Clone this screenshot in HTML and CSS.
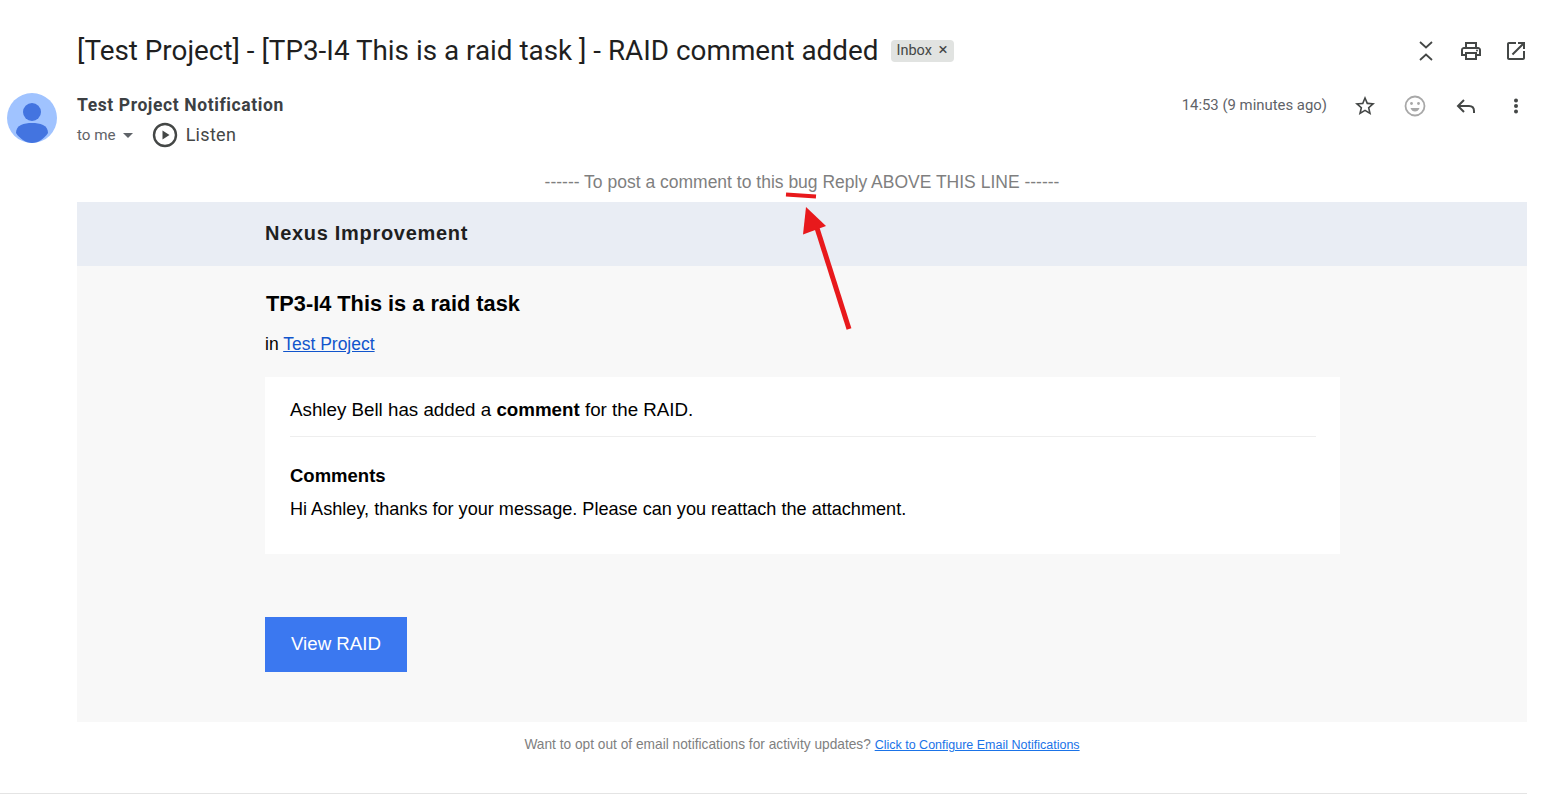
FILE: index.html
```html
<!DOCTYPE html>
<html lang="en">
<head>
<meta charset="utf-8">
<title>RAID comment added</title>
<link rel="stylesheet" href="styles.css">
</head>
<body>
<header class="subject-row">
  <h1 class="subject">[Test Project] - [TP3-I4 This is a raid task ] - RAID comment added</h1>
  <span class="chip">Inbox <span class="chip-x">×</span></span>
  <div class="subject-actions">
    <svg class="icon" viewBox="0 0 24 24"><path d="M6 3l6 5.500L18 3M6 21l6-5.500L18 21" fill="none" stroke="#444746" stroke-width="1.800"/></svg>
    <svg class="icon" viewBox="0 0 24 24"><path d="M19 8h-1V3H6v5H5c-1.660 0-3 1.340-3 3v6h4v4h12v-4h4v-6c0-1.660-1.340-3-3-3zM8 5h8v3H8V5zm8 12v2H8v-4h8v2zm2-2v-2H6v2H4v-4c0-.55.45-1 1-1h14c.55 0 1 .45 1 1v4h-2z" fill="#444746"/><circle cx="18" cy="11.500" r="1" fill="#444746"/></svg>
    <svg class="icon" viewBox="0 0 24 24"><path d="M19 19H5V5h7V3H5c-1.110 0-2 .9-2 2v14c0 1.100.89 2 2 2h14c1.100 0 2-.9 2-2v-7h-2v7zM14 3v2h3.590l-9.830 9.830 1.410 1.410L19 6.410V10h2V3h-7z" fill="#444746"/></svg>
  </div>
</header>
<section class="sender-row">
  <svg class="avatar" viewBox="0 0 50 50"><circle cx="25" cy="25" r="25" fill="#a0c3ff"/><circle cx="25" cy="19" r="9" fill="#4374e0"/><path d="M9 40c0-8 8-10 16-10s16 2 16 10c-4 6-10 10-16 10S13 46 9 40z" fill="#4374e0"/></svg>
  <div class="sender-info">
    <div class="sender-name">Test Project Notification</div>
    <div class="sender-sub">
      <span class="to-me">to me</span><span class="caret"></span>
      <svg class="play" viewBox="0 0 26 26"><circle cx="13" cy="13" r="11" fill="none" stroke="#444746" stroke-width="2.400"/><path d="M10.500 8.500v9l7-4.500z" fill="#444746"/></svg>
      <span class="listen">Listen</span>
    </div>
  </div>
  <div class="sender-meta">
    <span class="time">14:53 (9 minutes ago)</span>
    <svg class="icon" viewBox="0 0 24 24"><path d="M22 9.240l-7.190-.62L12 2 9.190 8.630 2 9.240l5.460 4.730L5.820 21 12 17.270 18.180 21l-1.630-7.030L22 9.240zM12 15.400l-3.760 2.270 1-4.280-3.320-2.880 4.380-.38L12 6.100l1.710 4.040 4.380.38-3.320 2.880 1 4.280L12 15.400z" fill="#444746"/></svg>
    <svg class="icon" viewBox="0 0 24 24"><circle cx="12" cy="12" r="9.500" fill="none" stroke="#a8a8a8" stroke-width="1.800"/><circle cx="8.500" cy="9.500" r="1.400" fill="#a8a8a8"/><circle cx="15.500" cy="9.500" r="1.400" fill="#a8a8a8"/><path d="M7.500 14h9c-.8 2.500-2.500 3.500-4.500 3.500S8.300 16.500 7.500 14z" fill="#a8a8a8"/></svg>
    <svg class="icon" viewBox="0 0 24 24"><path d="M10 6 4 12l6 6M4.500 12H15c3 0 5 2 5 5v2" fill="none" stroke="#444746" stroke-width="2"/></svg>
    <svg class="icon" viewBox="0 0 24 24"><circle cx="12" cy="6.500" r="2" fill="#444746"/><circle cx="12" cy="12" r="2" fill="#444746"/><circle cx="12" cy="17.500" r="2" fill="#444746"/></svg>
  </div>
</section>
<main class="mail">
  <p class="reply-line">------ To post a comment to this bug Reply ABOVE THIS LINE ------</p>
  <div class="banner">Nexus Improvement</div>
  <div class="panel">
    <h2 class="task-title">TP3-I4 This is a raid task</h2>
    <p class="project">in <a href="#">Test Project</a></p>
    <div class="card">
      <p class="card-lead">Ashley Bell has added a <b>comment</b> for the RAID.</p>
      <hr class="card-rule">
      <h3 class="card-heading">Comments</h3>
      <p class="card-text">Hi Ashley, thanks for your message. Please can you reattach the attachment.</p>
    </div>
    <a class="button" href="#">View RAID</a>
  </div>
  <p class="footer-note">Want to opt out of email notifications for activity updates? <a href="#">Click to Configure Email Notifications</a></p>
</main>
<div class="bottom-rule"></div>
<svg class="annotation" viewBox="0 0 1543 795">
  <path d="M786 194.500 816 196.500" stroke="#e8191c" stroke-width="4" fill="none"/>
  <path d="M849 329 817 228" stroke="#e8191c" stroke-width="5" fill="none"/>
  <path d="M806 207 803 234.500 826 226z" fill="#e8191c"/>
</svg>
</body>
</html>
```
FILE: styles.css
```css
* { box-sizing: border-box; }
html, body { margin: 0; padding: 0; }
body {
  width: 1543px;
  height: 795px;
  overflow: hidden;
  background: #fff;
  font-family: "Liberation Sans", Arial, sans-serif;
  color: #000;
  position: relative;
}
.subject-row {
  display: flex;
  align-items: center;
  height: 46px;
  margin-top: 28px;
  padding-left: 77px;
  padding-right: 15.500px;
}
.subject {
  margin: 0;
  font: 400 27.850px/46px Roboto, sans-serif;
  color: #1f1f1f;
  white-space: nowrap;
}
.chip {
  margin-left: 12px;
  height: 22px;
  padding: 0 6px 0 6px;
  border-radius: 4px;
  background: #e1e3e1;
  color: #444746;
  font: 400 14.500px/21px Roboto, sans-serif;
  white-space: nowrap;
}
.chip-x { margin-left: 3px; font-size: 17px; line-height: 17px; }
.subject-actions {
  margin-left: auto;
  display: flex;
  gap: 21px;
}
.icon { width: 24px; height: 24px; display: block; flex: none; }
.sender-row {
  display: flex;
  height: 70px;
  padding-left: 7px;
  padding-right: 15px;
  margin-top: 19px;
}
.avatar { width: 50px; height: 50px; flex: none; }
.sender-info { margin-left: 20px; }
.sender-name {
  font: 700 17.500px/24px Roboto, sans-serif;
  color: #3c4043;
  white-space: nowrap;
  letter-spacing: 0.600px;
}
.sender-sub {
  display: flex;
  align-items: center;
  margin-top: 5px;
  height: 26px;
}
.to-me { font: 400 15.200px/20px Roboto, sans-serif; color: #5f6368; }
.caret {
  margin-left: 7px;
  border: 5.500px solid transparent;
  border-top: 5px solid #5f6368;
  border-bottom: 0;
}
.play { width: 26px; height: 26px; margin-left: 19px; flex: none; }
.listen { margin-left: 8px; font: 400 18px/24px Roboto, sans-serif; color: #444746; letter-spacing: 0.300px; }
.sender-meta {
  margin-left: auto;
  margin-top: 1px;
  display: flex;
  align-items: center;
  height: 24px;
  gap: 26.500px;
}
.time { margin-right: -1px; margin-top: -2px; font: 400 14.900px/20px Roboto, sans-serif; color: #5f6368; }
.mail { margin: 0 16px 0 77px; }
.reply-line {
  margin: 8px 0 0;
  height: 31px;
  text-align: center;
  font-size: 17.500px;
  line-height: 22px;
  color: #7f7f7f;
  white-space: nowrap;
}
.banner {
  height: 64px;
  padding-left: 188px;
  background: #e9edf4;
  font-size: 20px;
  font-weight: 700;
  line-height: 62px;
  color: #1f1f1f;
  letter-spacing: 0.700px;
}
.panel {
  height: 456px;
  padding: 24px 187px 0 188px;
  background: #f8f8f8;
}
.task-title {
  margin: 0;
  font-size: 21.750px;
  line-height: 28px;
  font-weight: 700;
  padding-left: 1px;
}
.project {
  margin: 14px 0 0;
  font-size: 17.500px;
  line-height: 24px;
}
.project a { color: #1155cc; }
.card {
  height: 177px;
  margin-top: 21px;
  padding: 21px 24px 0 25px;
  background: #fff;
}
.card-lead { margin: 0; font-size: 18.750px; line-height: 24px; }
.card-rule { margin: 14px 0 0; border: 0; border-top: 1px solid #eee; }
.card-heading { margin: 27px 0 0; font-size: 18.500px; line-height: 24px; font-weight: 700; }
.card-text { margin: 9px 0 0; font-size: 18.100px; line-height: 24px; }
.button {
  display: block;
  width: 142px;
  height: 55px;
  margin-top: 63px;
  background: #3b78f0;
  color: #fff;
  text-align: center;
  font-size: 18.700px;
  line-height: 53px;
  text-decoration: none;
}
.footer-note {
  margin: 14px 0 0;
  text-align: center;
  font-size: 13.730px;
  line-height: 18px;
  color: #7f7f7f;
}
.footer-note a { color: #1a73e8; font-size: 12.500px; }
.bottom-rule {
  position: absolute;
  left: 0;
  right: 16px;
  top: 793px;
  border-top: 1px solid #e4e4e4;
}
.annotation {
  position: absolute;
  left: 0;
  top: 0;
  width: 1543px;
  height: 795px;
  pointer-events: none;
}
```
